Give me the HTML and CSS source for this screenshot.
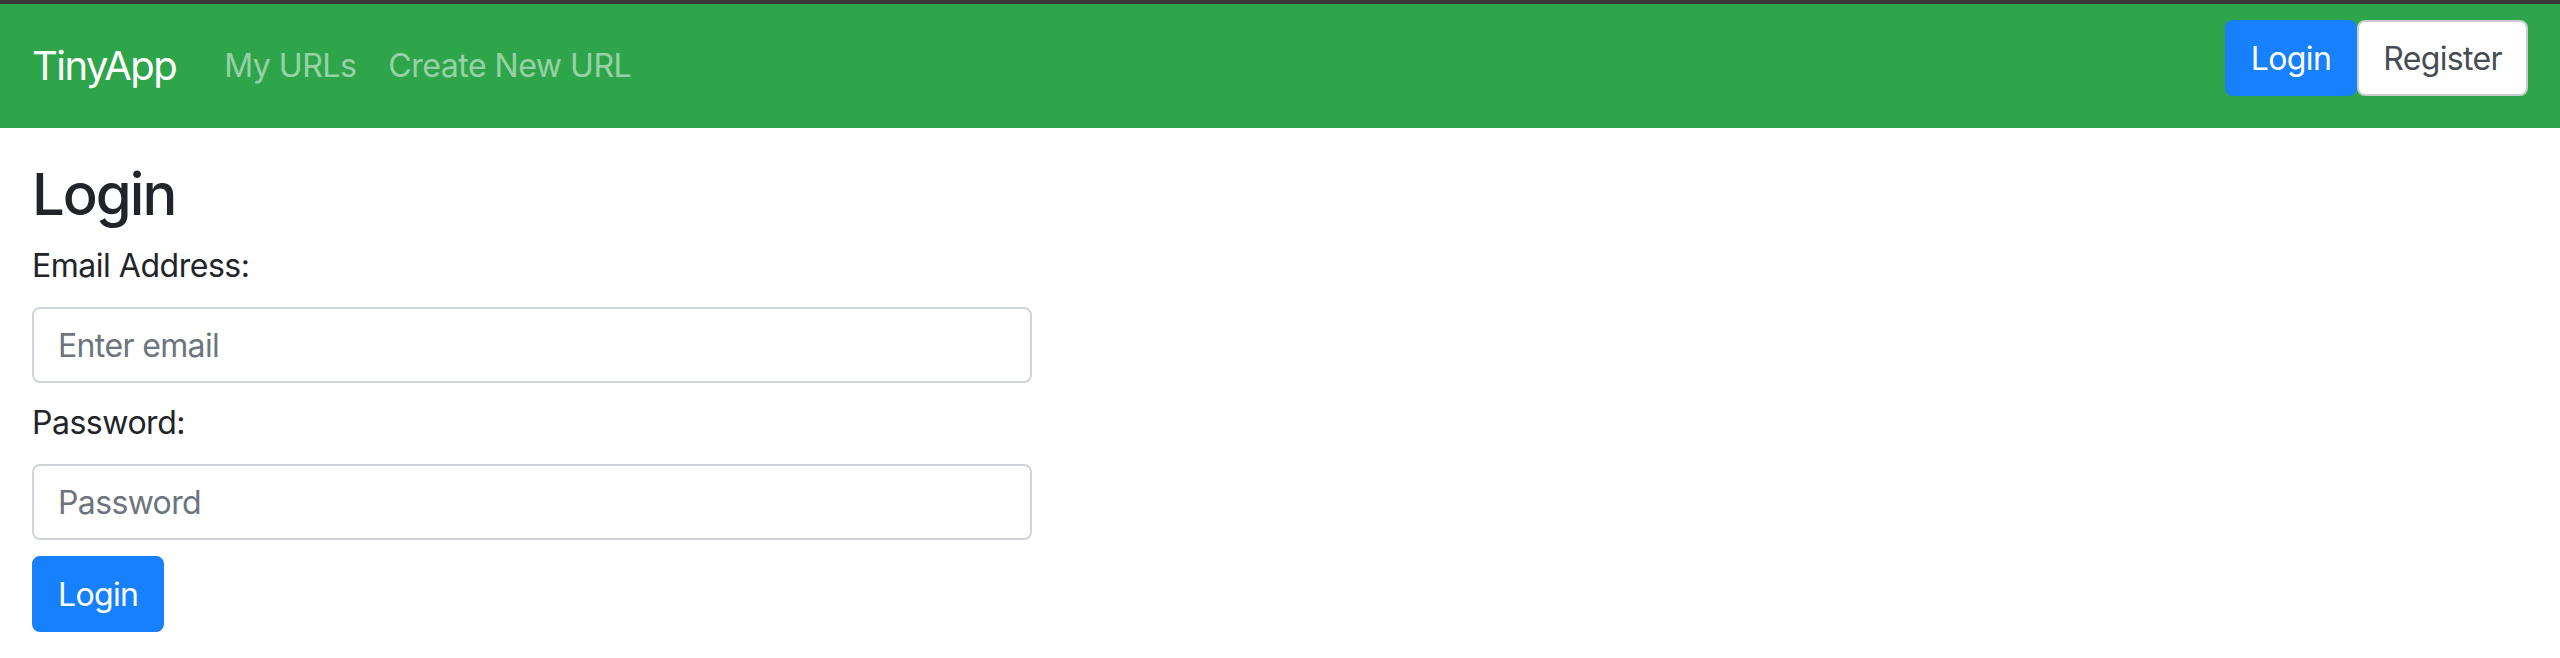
FILE: index.html
```html
<!DOCTYPE html>
<html lang="en">
<head>
<meta charset="utf-8">
<title>TinyApp - Login</title>
<link rel="stylesheet" href="styles.css">
</head>
<body>
<nav class="navbar">
  <a class="brand" href="#">TinyApp</a>
  <div class="nav-links">
    <a class="nav-link" href="#">My URLs</a>
    <a class="nav-link" href="#">Create New URL</a>
  </div>
  <div class="nav-actions">
    <a class="btn btn-primary" href="#">Login</a><a class="btn btn-white" href="#">Register</a>
  </div>
</nav>
<main class="content">
  <h1 class="title">Login</h1>
  <form class="login-form">
    <div class="field">
      <label class="label" for="email">Email Address:</label>
      <input class="input" id="email" type="email" placeholder="Enter email">
    </div>
    <div class="field">
      <label class="label" for="password">Password:</label>
      <input class="input" id="password" type="password" placeholder="Password">
    </div>
    <button class="btn btn-primary" type="submit">Login</button>
  </form>
</main>
</body>
</html>
```
FILE: styles.css
```css
* { box-sizing: border-box; }
html, body {
  margin: 0;
  padding: 0;
  background: #ffffff;
  font-family: "Inter", "Roboto", "Liberation Sans", sans-serif;
  letter-spacing: -0.03em;
  color: #212529;
}
.navbar {
  display: flex;
  align-items: center;
  height: 128px;
  border-top: 4px solid #3a3a3a;
  background: #2fa54b;
  padding: 0 32px;
}
.brand {
  font-size: 40px;
  line-height: 60px;
  letter-spacing: -0.038em;
  color: #ffffff;
  text-decoration: none;
  margin-right: 32px;
}
.nav-links {
  display: flex;
}
.nav-link {
  font-size: 32px;
  line-height: 48px;
  padding: 0 16px;
  color: rgba(255, 255, 255, 0.5);
  text-decoration: none;
}
.nav-actions {
  margin-left: auto;
  align-self: flex-start;
  margin-top: 16px;
  display: flex;
}
.btn {
  display: inline-flex;
  align-items: center;
  justify-content: center;
  height: 76px;
  padding: 0 24px;
  font-family: inherit;
  letter-spacing: -0.02em;
  font-size: 32px;
  border-radius: 8px;
  border: 2px solid transparent;
  text-decoration: none;
  cursor: pointer;
}
.btn-primary {
  background: #1780fc;
  border-color: #1780fc;
  color: #ffffff;
}
.btn-white {
  background: #ffffff;
  border-color: #c9ccd0;
  color: #464c53;
}
.content {
  padding: 0 32px;
}
.title {
  font-size: 58px;
  font-weight: 500;
  letter-spacing: -2px;
  line-height: 70px;
  margin: 0;
  padding-top: 31px;
}
.login-form {
  display: flex;
  flex-direction: column;
  align-items: flex-start;
  gap: 16px;
  margin-top: 13px;
}
.field {
  display: flex;
  flex-direction: column;
  gap: 17px;
}
.label {
  font-size: 32px;
  line-height: 48px;
}
.input {
  width: 1000px;
  height: 76px;
  border: 2px solid #ced4da;
  border-radius: 8px;
  padding: 0 24px;
  font-family: inherit;
  letter-spacing: -0.02em;
  font-size: 32px;
  color: #495057;
}
.input::placeholder {
  color: #6c757d;
}
```
